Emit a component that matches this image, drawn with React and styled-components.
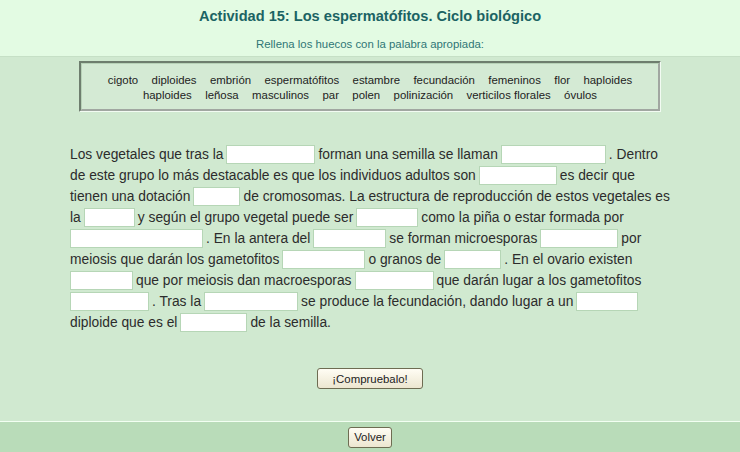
import React from "react";
import styled, { createGlobalStyle } from "styled-components";

const GlobalStyle = createGlobalStyle`
  html, body {
    margin: 0;
    padding: 0;
    background: #d0e9d0;
    font-family: "Liberation Sans", Arial, sans-serif;
  }
`;

const words = [
  ["cigoto", "diploides", "embrión", "espermatófitos", "estambre", "fecundación", "femeninos", "flor", "haploides"],
  ["haploides", "leñosa", "masculinos", "par", "polen", "polinización", "verticilos florales", "óvulos"],
];

// cada línea: textos y anchos de los huecos
const lines = [
  ["Los vegetales que tras la", 89, "forman una semilla se llaman", 105, ". Dentro"],
  ["de este grupo lo más destacable es que los individuos adultos son", 78, "es decir que"],
  ["tienen una dotación", 47, "de cromosomas. La estructura de reproducción de estos vegetales es"],
  ["la", 51, "y según el grupo vegetal puede ser", 62, "como la piña o estar formada por"],
  [133, ". En la antera del", 73, "se forman microesporas", 78, "por"],
  ["meiosis que darán los gametofitos", 83, "o granos de", 57, ". En el ovario existen"],
  [63, "que por meiosis dan macroesporas", 79, "que darán lugar a los gametofitos"],
  [79, ". Tras la", 94, "se produce la fecundación, dando lugar a un", 62],
  ["diploide que es el", 67, "de la semilla."],
];

const Page = styled.div`
  width: 740px;
  display: flex;
  flex-direction: column;
`;

const Header = styled.header`
  background: #e3fbe3;
  height: 57px;
  box-sizing: border-box;
  padding-top: 7px;
  text-align: center;
  border-bottom: 1px solid #c6e0c6;
`;

const Title = styled.h1`
  margin: 0;
  font-size: 14.6px;
  font-weight: bold;
  color: #1b6363;
  line-height: 18px;
`;

const Subtitle = styled.p`
  margin: 12px 0 0;
  font-size: 11.4px;
  color: #2f7676;
  line-height: 14px;
`;

const Main = styled.main`
  background: #d0e9d0;
  height: 364px;
  box-sizing: border-box;
  padding-top: 4px;
  display: flex;
  flex-direction: column;
  align-items: center;
`;

const WordBank = styled.div`
  width: 582px;
  height: 51px;
  box-sizing: border-box;
  border: 3px groove #eef8ee;
  border-color: #b8d2b8 #f2fbf2 #f2fbf2 #b8d2b8;
  background: #d4ead4;
  padding-top: 9px;
  display: flex;
  flex-direction: column;
  align-items: center;
`;

const WordRow = styled.div`
  display: flex;
  gap: 13.4px;
  font-size: 11.4px;
  line-height: 15px;
  color: #222;
`;

const Text = styled.div`
  margin: 32px 0 0 70px;
  align-self: flex-start;
  font-size: 13.8px;
  color: #2c2c2c;
`;

const Line = styled.div`
  height: 21px;
  line-height: 21px;
  white-space: nowrap;
  display: flex;
  align-items: center;
`;

const Gap = styled.input`
  box-sizing: border-box;
  width: ${(p) => p.$w}px;
  height: 19px;
  margin: 0 3px;
  border: 1px solid #b6d6b6;
  background: #fff;
  padding: 0;
  font: inherit;

  &:first-child {
    margin-left: 0;
  }
`;

const Button = styled.button`
  font-family: "Liberation Sans", Arial, sans-serif;
  font-size: 11.4px;
  color: #222;
  height: 21px;
  padding: 0 ${(p) => p.$pad}px;
  border: 1px solid #6e6c52;
  border-radius: 3px;
  background: linear-gradient(#fffdf4, #ece6d0);
  cursor: pointer;
`;

const Check = styled(Button)`
  margin-top: 35px;
  width: 106px;
`;

const Footer = styled.footer`
  background: #b9dcb9;
  border-top: 1px solid #f2fff2;
  height: 31px;
  box-sizing: border-box;
  display: flex;
  justify-content: center;
  align-items: center;
`;

export default function App() {
  return (
    <>
      <GlobalStyle />
      <Page>
        <Header>
          <Title>Actividad 15: Los espermatófitos. Ciclo biológico</Title>
          <Subtitle>Rellena los huecos con la palabra apropiada:</Subtitle>
        </Header>
        <Main>
          <WordBank>
            {words.map((row, i) => (
              <WordRow key={i}>
                {row.map((w, j) => (
                  <span key={j}>{w}</span>
                ))}
              </WordRow>
            ))}
          </WordBank>
          <Text>
            {lines.map((line, i) => (
              <Line key={i}>
                {line.map((p, j) =>
                  typeof p === "number" ? (
                    <Gap key={j} $w={p} type="text" />
                  ) : (
                    <span key={j}>{p}</span>
                  )
                )}
              </Line>
            ))}
          </Text>
          <Check $pad={8}>¡Compruebalo!</Check>
        </Main>
        <Footer>
          <Button $pad={5}>Volver</Button>
        </Footer>
      </Page>
    </>
  );
}
